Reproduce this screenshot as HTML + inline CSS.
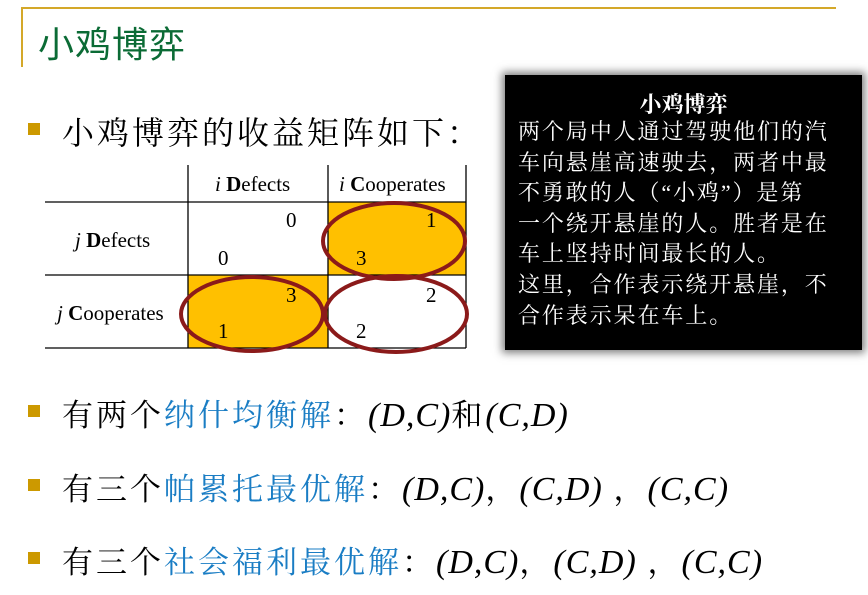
<!DOCTYPE html>
<html><head><meta charset="utf-8"><style>
body{margin:0;width:868px;height:595px;background:#fff;position:relative;overflow:hidden;font-family:"Liberation Sans","Noto Sans CJK SC",sans-serif;}
.a{position:absolute;white-space:nowrap;}
.cn{font-family:"Liberation Serif","Noto Serif CJK SC","Noto Sans CJK SC",serif;}
.b{position:absolute;width:12px;height:12px;background:#cc9900;left:28px;}
.blue{color:#1a7dc4;}
.m{font-family:"Liberation Serif",serif;font-style:italic;font-size:34px;letter-spacing:1px;}
.t{font-family:"Liberation Serif",serif;font-size:21px;}
</style></head><body>
<div class="a" style="left:21px;top:7px;width:815px;height:2px;background:#d4a829"></div>
<div class="a" style="left:21px;top:7px;width:2px;height:60px;background:#d4a829"></div>
<div class="a" style="left:38px;top:16px;font-size:36px;letter-spacing:1px;color:#0b6b35;">小鸡博弈</div>

<div class="b" style="top:123px"></div>
<div class="a cn" style="left:62px;top:108px;font-size:32px;letter-spacing:3px;">小鸡博弈的收益矩阵如下：</div>

<svg class="a" style="left:0;top:0" width="868" height="595">
<rect x="188" y="275" width="140" height="73" fill="#ffc000"/>
<rect x="328" y="202" width="138" height="73" fill="#ffc000"/>
<g stroke="#000" stroke-width="1.3">
<line x1="188" y1="165" x2="188" y2="348"/><line x1="328" y1="165" x2="328" y2="348"/><line x1="466" y1="165" x2="466" y2="348"/>
<line x1="45" y1="202" x2="466" y2="202"/><line x1="45" y1="275" x2="466" y2="275"/><line x1="45" y1="348" x2="466" y2="348"/>
</g>
<g fill="none" stroke="#8b1a1a" stroke-width="4">
<ellipse cx="394" cy="241" rx="71" ry="38"/>
<ellipse cx="252" cy="314" rx="71" ry="37"/>
<ellipse cx="396" cy="314" rx="71" ry="38"/>
</g>
</svg>
<div class="a t" style="left:215px;top:172px"><i>i</i> <b>D</b>efects</div>
<div class="a t" style="left:339px;top:172px"><i>i</i> <b>C</b>ooperates</div>
<div class="a t" style="left:75px;top:228px"><i>j</i> <b>D</b>efects</div>
<div class="a t" style="left:57px;top:301px"><i>j</i> <b>C</b>ooperates</div>
<div class="a t" style="left:286px;top:208px">0</div>
<div class="a t" style="left:218px;top:246px">0</div>
<div class="a t" style="left:426px;top:208px">1</div>
<div class="a t" style="left:356px;top:246px">3</div>
<div class="a t" style="left:286px;top:283px">3</div>
<div class="a t" style="left:218px;top:319px">1</div>
<div class="a t" style="left:426px;top:283px">2</div>
<div class="a t" style="left:356px;top:319px">2</div>

<div class="a" style="left:505px;top:75px;width:357px;height:275px;background:#000;box-shadow:0 0 8px 3px rgba(0,0,0,0.5);"></div>
<div class="a cn" style="left:505px;top:88px;width:357px;text-align:center;color:#fff;font-size:22px;font-weight:bold;">小鸡博弈</div>
<div class="a cn" style="left:518px;top:117px;color:#fff;font-size:22px;line-height:30.6px;letter-spacing:1.9px;">两个局中人通过驾驶他们的汽<br>车向悬崖高速驶去，两者中最<br>不勇敢的人（“小鸡”）是第<br>一个绕开悬崖的人。胜者是在<br>车上坚持时间最长的人。<br>这里，合作表示绕开悬崖，不<br>合作表示呆在车上。</div>

<div class="b" style="top:405px"></div>
<div class="a cn" style="left:62px;top:390px;font-size:31px;letter-spacing:3px;">有两个<span class="blue">纳什均衡解</span>：<span class="m">(D,C)</span>和<span class="m">(C,D)</span></div>
<div class="b" style="top:479px"></div>
<div class="a cn" style="left:62px;top:464px;font-size:31px;letter-spacing:3px;">有三个<span class="blue">帕累托最优解</span>：<span class="m">(D,C)</span>，<span class="m">(C,D)</span> ，<span class="m">(C,C)</span></div>
<div class="b" style="top:552px"></div>
<div class="a cn" style="left:62px;top:537px;font-size:31px;letter-spacing:3px;">有三个<span class="blue">社会福利最优解</span>：<span class="m">(D,C)</span>，<span class="m">(C,D)</span> ，<span class="m">(C,C)</span></div>
</body></html>
